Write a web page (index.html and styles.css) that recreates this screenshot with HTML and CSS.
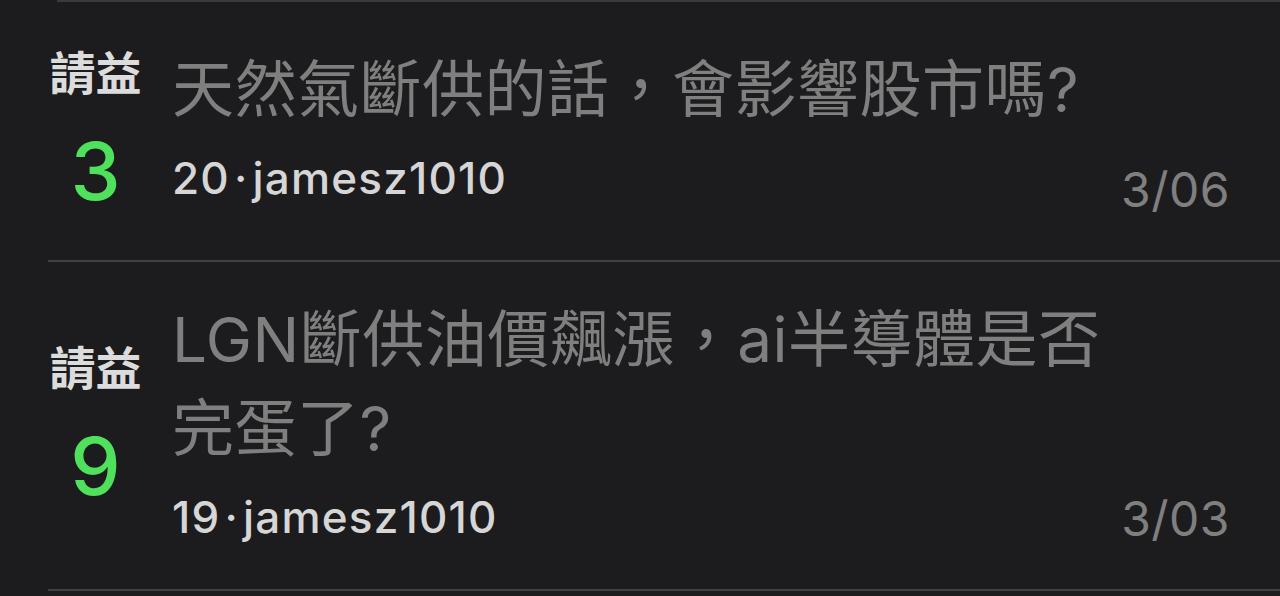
FILE: index.html
```html
<!DOCTYPE html>
<html lang="zh-Hant">
<head>
<meta charset="utf-8">
<title>請益列表</title>
<link rel="stylesheet" href="styles.css">
</head>
<body>
<div class="list">
  <div class="top-rule"></div>
  <article class="row">
    <div class="score">
      <span class="tag">請益</span>
      <span class="num">3</span>
    </div>
    <div class="main">
      <h2 class="title">天然氣斷供的話，會影響股市嗎?</h2>
      <div class="meta">20<span class="dot">·</span>jamesz1010</div>
    </div>
    <div class="date">3/06</div>
  </article>
  <article class="row">
    <div class="score">
      <span class="tag">請益</span>
      <span class="num">9</span>
    </div>
    <div class="main">
      <h2 class="title">LGN斷供油價飆漲，ai半導體是否完蛋了?</h2>
      <div class="meta">19<span class="dot">·</span>jamesz1010</div>
    </div>
    <div class="date">3/03</div>
  </article>
</div>
</body>
</html>
```
FILE: styles.css
```css
html, body {
  margin: 0;
  padding: 0;
  background: #1c1c1e;
}
body {
  font-family: "Inter", "Noto Sans CJK TC", sans-serif;
  height: 596px;
  overflow: hidden;
}
.list {
  display: flex;
  flex-direction: column;
}
.top-rule {
  height: 2px;
  margin-left: 57px;
  background: #3a3a3c;
}
.row {
  display: flex;
  align-items: center;
  margin-left: 48px;
  padding: 33px 50px 33px 0;
  border-bottom: 2px solid #414143;
}
.score {
  width: 95px;
  margin-right: 29px;
  flex: none;
  display: flex;
  flex-direction: column;
  align-items: center;
  padding: 8px 0;
  gap: 25px;
}
.tag {
  font-family: "Noto Sans CJK TC", sans-serif;
  font-weight: 700;
  font-size: 46px;
  line-height: 55px;
  color: #dcdcdc;
}
.num {
  font-family: "Inter", sans-serif;
  font-weight: 500;
  font-size: 80px;
  line-height: 96px;
  color: #4fe05c;
}
.main {
  flex: 1;
  min-width: 0;
  padding-bottom: 12px;
}
.title {
  margin: 0;
  max-width: 950px;
  font-family: "Inter", "Noto Sans CJK TC", sans-serif;
  font-weight: 400;
  font-size: 62px;
  line-height: 89px;
  letter-spacing: 0.5px;
  color: #7f7f7f;
}
.meta {
  margin-top: 18px;
  font-family: "Inter", sans-serif;
  font-weight: 450;
  font-size: 44px;
  line-height: 53px;
  letter-spacing: 1.2px;
  color: #d6d6d6;
}
.dot {
  margin: 0 4px;
}
.date {
  align-self: flex-end;
  flex: none;
  margin-bottom: 8px;
  font-family: "Inter", sans-serif;
  font-size: 48px;
  line-height: 58px;
  letter-spacing: 0.5px;
  color: #7f7f7f;
}
```
